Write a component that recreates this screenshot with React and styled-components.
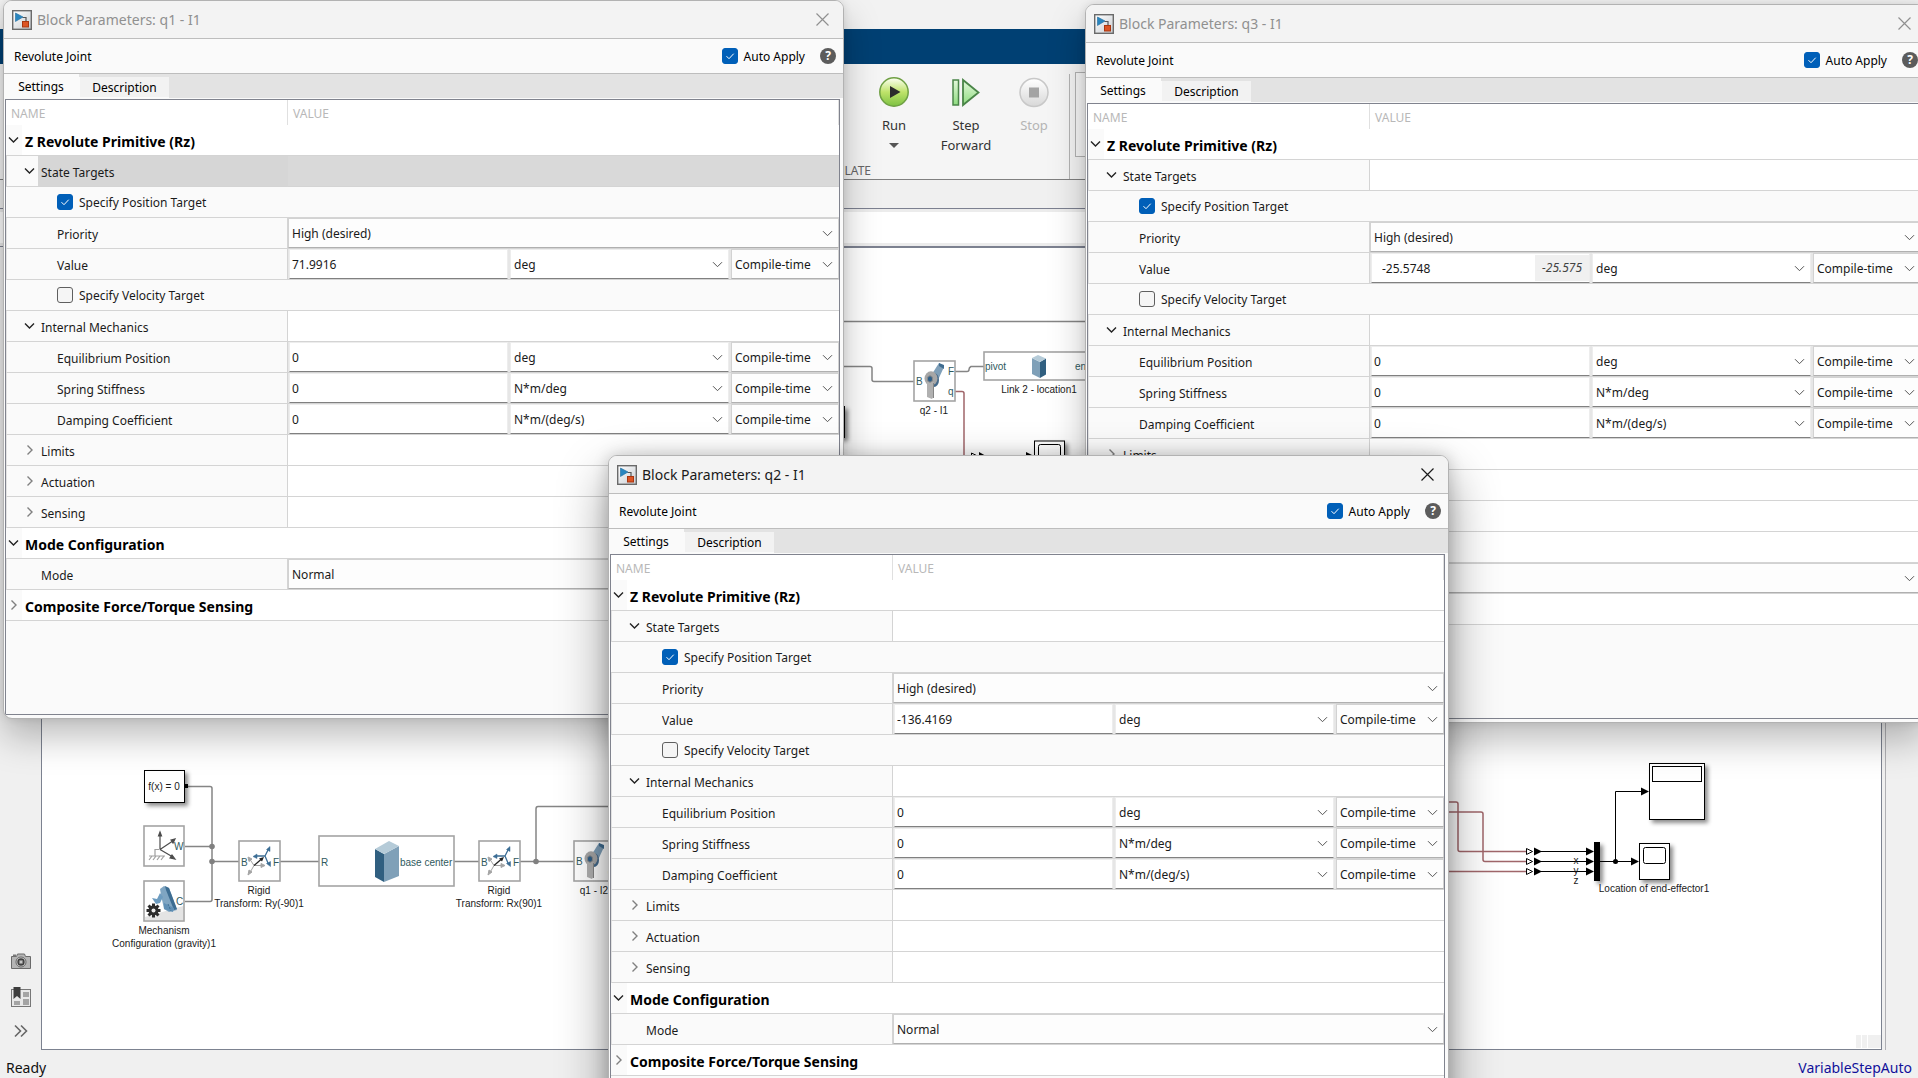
import React, { useState } from 'react';
import styled, { createGlobalStyle, css } from 'styled-components';

const GlobalStyle = createGlobalStyle`
  * {
    box-sizing: border-box;
  }

  body {
    margin: 0;
    font-family: 'Noto Sans', 'Open Sans', sans-serif;
    font-size: 12px;
    color: #1a1a1a;
  }

  button, input, select {
    margin: 0;
    padding: 0;
    border: 0;
    background: none;
    font: inherit;
    color: inherit;
  }
`;

/* ---------- main window ---------- */

const Desktop = styled.main`
  position: relative;
  display: flex;
  flex-direction: column;
  width: 100%;
  height: 100vh;
  overflow: hidden;
  background: #f0f0f0;
`;

const TitleStrip = styled.div`
  flex: none;
  height: 29px;
  background: #f2f2f2;
`;

const TabStrip = styled.div`
  flex: none;
  height: 35px;
  background: #004073;
`;

const Toolstrip = styled.div`
  flex: none;
  display: flex;
  height: 116px;
  background: #f5f5f5;
  border-bottom: 1px solid #808080;
`;

const ToolGroup = styled.section`
  display: flex;
  flex-direction: column;
  width: 1070px;
  margin-top: 10px;
  border-right: 1px solid #b4b4b4;
`;

const ToolRow = styled.div`
  flex: 1;
  display: flex;
  justify-content: flex-end;
  padding-right: 5px;
`;

const ToolButton = styled.button`
  display: flex;
  flex-direction: column;
  align-items: center;
  width: ${({ $width }) => $width}px;
  font-size: 13px;
  line-height: 20px;
  color: #333;

  svg {
    margin: 2px 0 7px;
  }

  &:disabled {
    color: #b4b4b4;
  }
`;

const DropArrow = styled.span`
  margin-top: 8px;
  border: 5px solid transparent;
  border-top-color: #555;
  border-bottom: 0;
`;

const GroupName = styled.span`
  align-self: flex-end;
  margin-right: 198px;
  font-size: 12px;
  line-height: 17px;
  color: #666;
`;

const Gallery = styled.div`
  flex: 1;
  height: 85px;
  margin: 8px 5px;
  border: 1px solid #b4b4b4;
  background: #f9f9f9;
`;

const DocBar = styled.div`
  flex: none;
  height: 28px;
  background: #f0f0f0;
`;

const PathBar = styled.div`
  flex: none;
  height: 39px;
  border: solid #7c8090;
  border-width: 1px 0;
  background: #fff;
  box-shadow: inset 0 3px #ececec, inset 0 -3px #ececec;
`;

const Workspace = styled.div`
  flex: 1;
  display: flex;
  min-height: 0;
  padding-right: 32px;
`;

const SideBar = styled.nav`
  display: flex;
  flex-direction: column;
  justify-content: flex-end;
  align-items: center;
  gap: 13px;
  width: 41px;
  padding-bottom: 6px;

  button {
    height: 22px;
  }
`;

const Canvas = styled.div`
  flex: 1;
  display: flex;
  border: 1px solid #7c8290;
  background: #fff;
`;

const EdgeLine = styled.div`
  width: 4px;
  border-right: 1px solid #b0b0b4;
`;

const StatusBar = styled.footer`
  flex: none;
  display: flex;
  justify-content: space-between;
  height: 28px;
  padding: 0 6px;
  font-size: 14px;
  line-height: 36px;
  color: #111;
`;

const SolverLink = styled.a`
  color: #10109a;
  text-decoration: none;
`;

const DiagramSvg = styled.svg`
  flex: 1;
  width: 100%;
  height: 100%;
  font-family: 'Liberation Sans', Arial, sans-serif;
  font-size: 10px;

  .port {
    fill: #2f5a5e;
  }
  .name {
    fill: #1a1a1a;
    text-anchor: middle;
  }
  .wire {
    fill: none;
    stroke: #858585;
    stroke-width: 1.5;
  }
  .signal {
    fill: none;
    stroke: #a0666a;
    stroke-width: 1.5;
  }
  .line {
    fill: none;
    stroke: #000;
  }
  .frame {
    fill: #fff;
    stroke: #a4a4a4;
    stroke-width: 1.6;
  }
  .black {
    fill: #fff;
    stroke: #000;
  }
  .lift {
    filter: drop-shadow(3px 3px 2px rgba(0, 0, 0, 0.45));
  }
`;

/* ---------- dialogs ---------- */

const Dialog = styled.section`
  position: absolute;
  left: ${({ $left }) => $left}px;
  top: ${({ $top }) => $top}px;
  width: 841px;
  border: 1px solid #b2b2b2;
  border-radius: 9px;
  background: #fafafa;
  overflow: hidden;
  box-shadow: ${({ $active }) =>
    $active
      ? '0 22px 50px rgba(0, 0, 0, 0.42), 0 0 16px rgba(0, 0, 0, 0.18)'
      : '0 18px 36px rgba(0, 0, 0, 0.26), 0 0 8px rgba(0, 0, 0, 0.1)'};
`;

const DialogTitle = styled.header`
  display: flex;
  align-items: center;
  gap: 5px;
  height: 38px;
  padding: 0 14px 0 8px;
  border-bottom: 1px solid #bdbdbd;
  background: #f3f3f3;
  color: ${({ $active }) => ($active ? '#1a1a1a' : '#909090')};

  h2 {
    flex: 1;
    margin: 0;
    font-size: 14px;
    font-weight: 400;
  }

  button {
    display: flex;
  }
`;

const DialogHead = styled.div`
  display: flex;
  align-items: center;
  height: 35px;
  padding: 0 7px 0 10px;
  border-bottom: 1px solid #bdbdbd;
  color: #000;
`;

const BlockType = styled.span`
  flex: 1;
`;

const HelpButton = styled.button`
  width: 16px;
  height: 16px;
  margin-left: 15px;
  border-radius: 50%;
  background: #5c5c5c;
  color: #fff;
  font-size: 12px;
  font-weight: 700;
  line-height: 16px;
`;

const CheckLabel = styled.label`
  display: flex;
  align-items: center;
  gap: 6px;
`;

const CheckGrid = styled.span`
  display: grid;
  place-items: center;

  > * {
    grid-area: 1 / 1;
  }

  svg {
    pointer-events: none;
  }
`;

const CheckBox = styled.input`
  appearance: none;
  width: 16px;
  height: 16px;
  border: 1px solid #5f5f5f;
  border-radius: 3px;
  background: #f5f5f5;

  &:checked {
    border-color: #005fb8;
    background: #005fb8;
  }
`;

const Tabs = styled.div`
  display: flex;
  align-items: flex-end;
  height: 24px;
  background: #e3e3e3;
`;

const Tab = styled.button`
  color: #000;
  ${({ $selected }) =>
    $selected
      ? css`
          width: 75px;
          height: 24px;
          padding-right: 15px;
          padding-left: 14px;
          background: #fafafa;
        `
      : css`
          width: 90px;
          height: 21px;
          border: solid #fafafa;
          border-width: 0 0 1px 1px;
          background: #f2f2f2;
        `}
`;

const GridFrame = styled.div`
  margin: 1px 3px 3px 1px;
  padding-bottom: 93px;
  border: 1px solid #80838e;
`;

const PropertyTable = styled.table`
  width: 100%;
  table-layout: fixed;
  border-spacing: 0;

  th, td {
    height: 31px;
    padding: 0;
    border-bottom: 1px solid #d4d4d4;
    font-weight: 400;
    text-align: left;
  }

  tbody th {
    padding-top: 2px;
  }

  thead th {
    height: 25px;
    padding: 2px 0 0 5px;
    border: solid #e0e0e0;
    border-width: 0 1px 0 0;
    background: #fff;
    color: #b8b8b8;
  }
`;

const NameCol = styled.col`
  width: 282px;
`;

const NameCell = styled.th`
  border-right: 1px solid #d4d4d4;
  border-left: 1px solid #e2e2e2;
  background: ${({ $selected }) =>
    $selected ? 'linear-gradient(90deg, #fafafa 31px, #d6d6d6 31px)' : '#fafafa'};
  ${({ $selected }) => $selected && 'border-color: #d6d6d6;'}
`;

const PropLabel = styled.label`
  padding-left: ${({ $level }) => ($level === 2 ? '34px' : '50px')};
`;

const SectionCell = styled.th`
  background: linear-gradient(90deg, #fafafa 16px, #fff 16px);
`;

const CheckCell = styled.td`
  background: #fafafa;

  label {
    padding-left: 51px;
  }
`;

const ValueCell = styled.td`
  background: ${({ $selected }) => ($selected ? '#d9d9d9' : '#fff')};
`;

const Expander = styled.button`
  display: flex;
  align-items: center;
  gap: 6px;
  padding-left: ${({ $section }) => ($section ? '2px' : '17px')};
  ${({ $section }) =>
    $section &&
    css`
      font-size: 14px;
      font-weight: 700;
      color: #000;
    `}
`;

const FieldRow = styled.div`
  display: grid;
  grid-template-columns: 1fr 1fr 108px;
  gap: 2px;
  height: 30px;
  padding-left: 1px;
  background: #e6e6e6;
`;

const Field = styled.div`
  display: grid;
  align-items: center;
  height: 30px;
  border: solid #d2d2d2;
  border-width: 1px;
  border-bottom-color: #b0b0b0;
  background: #fdfdfd;
  ${({ $editable }) =>
    $editable &&
    css`
      border-color: #ededed;
      border-bottom-color: #808080;
      background: #fff;
    `}

  > * {
    grid-area: 1 / 1;
  }

  svg {
    justify-self: end;
    margin-right: 5px;
    pointer-events: none;
  }
`;

const SelectBox = styled.select`
  appearance: none;
  width: 100%;
  height: 28px;
  padding: 1px 0 0 3px;
`;

const TextBox = styled.input`
  width: 100%;
  height: 28px;
  padding: 1px 0 0 ${({ $inset }) => ($inset ? '10px' : '2px')};
`;

const Evaluated = styled.output`
  justify-self: end;
  height: 26px;
  padding: 0 7px;
  background: #f0f0f0;
  color: #444;
  font-style: italic;
  line-height: 25px;
`;

/* ---------- icons ---------- */

const BlockIcon = () => (
  <svg width="20" height="20" viewBox="0 0 20 20">
    <defs>
      <linearGradient id="blockFill" x1="0" y1="0" x2="1" y2="1">
        <stop offset="0" stopColor="#fff" />
        <stop offset="1" stopColor="#c9cdd2" />
      </linearGradient>
    </defs>
    <rect x="0.7" y="0.7" width="18.600" height="18.600" fill="url(#blockFill)" stroke="#6a6a6a" strokeWidth="1.400" />
    <path d="M10.500 7.500h3.500v5" fill="none" stroke="#555" strokeWidth="1.200" />
    <path d="M3.500 3l7.500 4-7.500 4.500z" fill="#2a86bf" stroke="#1f6c9e" strokeWidth="0.600" />
    <rect x="10.500" y="11.500" width="6" height="5.500" fill="#dc5424" stroke="#a83610" />
  </svg>
);

const CloseIcon = () => (
  <svg width="13" height="13" viewBox="0 0 13 13">
    <path d="M0.5 0.5l12 12M12.5 0.5l-12 12" stroke="currentColor" strokeWidth="1.2" />
  </svg>
);

const DownIcon = () => (
  <svg width="11" height="11" viewBox="0 0 11 11">
    <path d="M1 3.2l4.5 4.5L10 3.2" fill="none" stroke="#555" />
  </svg>
);

const Chevron = ({ open }) => (
  <svg width="11" height="12" viewBox="0 0 11 12">
    {open ? (
      <path d="M1 2.5l4.5 4.5L10 2.5" fill="none" stroke="#222" strokeWidth="1.4" />
    ) : (
      <path d="M3.5 0.5l4.5 4.5L3.5 9.5" fill="none" stroke="#808080" strokeWidth="1.4" />
    )}
  </svg>
);

const RunIcon = () => (
  <svg width="32" height="32" viewBox="0 0 32 32">
    <defs>
      <linearGradient id="runFill" x1="0" y1="0" x2="0" y2="1">
        <stop offset="0" stopColor="#fdfff4" />
        <stop offset="0.5" stopColor="#bfe36a" />
        <stop offset="1" stopColor="#7cc142" />
      </linearGradient>
    </defs>
    <circle cx="16" cy="16" r="14.2" fill="url(#runFill)" stroke="#6fa044" strokeWidth="1.5" />
    <path d="M12 10l10.500 6L12 22z" fill="#2c2c2c" />
  </svg>
);

const StepIcon = () => (
  <svg width="32" height="32" viewBox="0 0 32 32">
    <defs>
      <linearGradient id="stepFill" x1="0" y1="0" x2="0" y2="1">
        <stop offset="0" stopColor="#e4f8dc" />
        <stop offset="1" stopColor="#8fdc80" />
      </linearGradient>
    </defs>
    <rect x="3" y="4" width="5.500" height="25" fill="url(#stepFill)" stroke="#4a8548" strokeWidth="1.500" />
    <path d="M13 4v25l15.500-12.500z" fill="url(#stepFill)" stroke="#4a8548" strokeWidth="1.800" />
  </svg>
);

const StopIcon = () => (
  <svg width="32" height="32" viewBox="0 0 32 32">
    <defs>
      <linearGradient id="stopFill" x1="0" y1="0" x2="0" y2="1">
        <stop offset="0" stopColor="#fff" />
        <stop offset="1" stopColor="#d8d8d8" />
      </linearGradient>
    </defs>
    <circle cx="16" cy="16.500" r="14" fill="url(#stopFill)" stroke="#c8c8c8" strokeWidth="1.500" />
    <rect x="11" y="11.500" width="10" height="10" fill="#a4a4a4" />
  </svg>
);

const CameraIcon = () => (
  <svg width="20" height="16" viewBox="0 0 20 16">
    <path d="M0.500 3.500h5l1-2.500h7l1 2.500h5v12h-19z" fill="#b4b4b4" stroke="#6a6a6a" />
    <rect x="2" y="1.500" width="3" height="2" fill="#777" />
    <circle cx="10" cy="9" r="5" fill="#ddd" stroke="#666" />
    <circle cx="10" cy="9" r="3" fill="#888" stroke="#3c3c3c" strokeWidth="1.400" />
    <circle cx="10" cy="9" r="1" fill="#ddd" />
  </svg>
);

const BookmarkIcon = () => (
  <svg width="20" height="20" viewBox="0 0 20 20">
    <rect x="0.500" y="2.500" width="19" height="17" fill="#e8e8e8" stroke="#777" />
    <path d="M12 5h6v5h-6zM12 12h6v6h-6zM3 14h6v4H3z" fill="#a4a4a4" />
    <path d="M2.500 0h7v12L6 9l-3.500 3z" fill="#3c3c3c" />
  </svg>
);

const MoreIcon = () => (
  <svg width="14" height="14" viewBox="0 0 14 14">
    <path d="M1 1.500L6.500 7 1 12.500M7 1.500L12.500 7 7 12.500" fill="none" stroke="#666" strokeWidth="1.600" />
  </svg>
);

/* ---------- block diagram ---------- */

const Prism = ({ x, y, w, h }) => (
  <g transform={`translate(${x} ${y}) scale(${w / 24} ${h / 41})`}>
    <path d="M0 8l9 5v28l-9-5z" fill="#305f80" />
    <path d="M9 13l15-8v30L9 41z" fill="#7fa0b8" />
    <path d="M0 8L14 0l10 5-15 8z" fill="#b5cbd8" />
  </g>
);

/* the body of a link block, with the dark face on the right */
const LinkPrism = ({ x, y }) => (
  <g transform={`translate(${x} ${y})`}>
    <path d="M0 3l8 4v16l-8-4z" fill="#7fa0b8" />
    <path d="M8 7l6-3.500v16L8 23z" fill="#305f80" />
    <path d="M0 3l6-3 8 3.500L8 7z" fill="#b5cbd8" />
  </g>
);

const WorldFrame = () => (
  <g transform="translate(143 825)" fill="none" stroke="#4c4c4c" strokeWidth="1.200">
    <path d="M16 24.500h-4v6M6 31h16M9 31l-3 4M13 31l-3 4M17 31l-3 4M21 31l-3 4" stroke="#a0a0a0" />
    <path d="M17 24.500V9M17 24.500l12-8M17 24.500l12 7" />
    <path d="M15.500 11l1.500-4 1.500 4zM28 15l4-1-2 4zM27 33l5 1-3-4z" fill="#4c4c4c" />
  </g>
);

const Mechanism = () => (
  <g transform="translate(143 880)">
    <path d="M2 40V37L40 26v14z" fill="#e4e4e4" />
    <path d="M17 9l4-3 5 2 8 22-8 2-5-3-3-14z" fill="#7fa5c2" />
    <path d="M22 6l4 2 8 21-3 1-8-20z" fill="#3d6d92" />
    <path d="M9 18l5 1 3-6 3 4-3 6-4 1z" fill="#6d9cc0" />
    <path d="M21 23l10 5-1 4-9-3z" fill="#6090b6" />
    <path d="M25 24l3 7" stroke="#3d6d92" strokeDasharray="2 1.500" />
    <g stroke="#2c2c2c" strokeWidth="3">
      <path d="M10.500 23.500v14M3.500 30.500h14M5.500 25.500l10 10M15.500 25.500l-10 10" />
    </g>
    <circle cx="10.500" cy="30.500" r="5" fill="#2c2c2c" />
    <circle cx="10.500" cy="30.500" r="2" fill="#ececec" />
  </g>
);

const Joint = ({ x, y }) => (
  <g transform={`translate(${x} ${y})`}>
    <path d="M7 11l7-11 5 4-6 13z" fill="#7f9fb8" />
    <path d="M14 0l5 2v4l-5-3z" fill="#3f6c90" />
    <ellipse cx="9" cy="17" rx="5" ry="7" fill="#44698a" />
    <ellipse cx="6" cy="15.500" rx="6.500" ry="7.200" fill="#a6a6a6" />
    <path d="M2 19h7v14l-2 3-5-2z" fill="#b0b0b0" />
    <path d="M8.500 20v15" stroke="#858585" />
    <ellipse cx="5" cy="16" rx="2.600" ry="3.200" fill="#2f5f88" stroke="#8a8a8a" />
  </g>
);

const JointBlock = ({ x, y, name }) => (
  <g>
    <rect className="frame" x={x} y={y} width="41" height="40" />
    <Joint x={x + 11} y={y + 2} />
    <text className="port" x={x + 2} y={y + 24}>B</text>
    <text className="port" x={x + 34} y={y + 14}>F</text>
    <text className="port" x={x + 34} y={y + 34}>q</text>
    <text className="name" x={x + 20} y={y + 53}>{name}</text>
  </g>
);

const RigidBlock = ({ x, name }) => (
  <g>
    <rect className="frame" x={x} y="841" width="41" height="40" />
    <g transform={`translate(${x} 841)`}>
      <g stroke="#a4a4a4" fill="#a4a4a4">
        <path d="M15 24.500l-4-6M15 24.500h9M15 24.500l-4 7" fill="none" />
        <path d="M9 16l4 2-3 2.500zM22 22.500v4l4-2zM9 34l1-5 3 2z" />
      </g>
      <path d="M15 24.500l7-6" stroke="#222" strokeWidth="1.300" />
      <path d="M20 17.500l5-1.500-2 4.500z" fill="#222" />
      <g stroke="#3a6c94" fill="#3a6c94">
        <path d="M26 15l3-6M26 15h-8M26 15l3 7" fill="none" strokeWidth="1.300" />
        <path d="M27.500 8.500L31 5.500v5zM18 13v4.500l-4-2zM27.500 22.500l4 3v-5z" strokeWidth="0.500" />
      </g>
    </g>
    <text className="port" x={x + 2} y="866">B</text>
    <text className="port" x={x + 34} y="866">F</text>
    <text className="name" x={x + 20} y="894">Rigid</text>
    <text className="name" x={x + 20} y="907">{name}</text>
  </g>
);

const SignalInput = ({ y }) => (
  <g>
    <path className="line" d={`M1526.500 ${y - 3}v6l6-3z`} />
    <path className="line" d={`M1540 ${y}h48`} />
    <path d={`M1534 ${y - 4}l8 4-8 4zM1586 ${y - 4}l8 4-8 4z`} />
  </g>
);

/* drawn in window coordinates, the canvas starts at 42,248 */
const Diagram = () => (
  <DiagramSvg role="img" aria-label="Block diagram">
    <g transform="translate(-42 -248)">
      <path className="wire" d="M42 321.500H1882" />
      <path className="wire" d="M800 366.500H870q2 0 2 2V379.500q0 2 2 2H914" />
      <path className="wire" d="M954 371.500H967q2 0 2-2t2-3H984" />
      <path className="signal" d="M954 391.500H962q2 0 2 2V500" />
      <rect x="800" y="406" width="45" height="32" className="lift" />
      <JointBlock x={914} y={361} name="q2 - I1" />
      <rect className="frame" x="984" y="352" width="111" height="28" />
      <LinkPrism x={1032} y={355} />
      <text className="port" x="985" y="370">pivot</text>
      <text className="port" x="1075" y="370">end</text>
      <text className="name" x="1039" y="393">Link 2 - location1</text>
      <path d="M971.500 453v6l6-3z" className="line" />
      <path d="M979 452l7 4-7 4zM1026 452l8 4-8 4z" />
      <g className="lift">
        <rect className="black" x="1034.500" y="441" width="30" height="36" />
      </g>
      <rect className="black" x="1038.500" y="444.500" width="22" height="16" rx="2" />

      <path className="wire" d="M186 786.500H210q2 0 2 2V899.500q0 2-2 2H185M185 846.500H212M212 861.500H239" />
      <path className="wire" d="M280 861.500H319M454 861.500H479M520 861.500H574M536 861V809q0-2.500 2-2.500H640" />
      <circle cx="212" cy="846.500" r="2.800" fill="#808080" />
      <circle cx="212" cy="861.500" r="2.800" fill="#808080" />
      <circle cx="536" cy="861.500" r="2.800" fill="#808080" />
      <g className="lift">
        <rect className="black" x="144.500" y="770.500" width="40" height="32" />
      </g>
      <rect x="185" y="784" width="3" height="4" />
      <text className="name" x="164" y="790">f(x) = 0</text>
      <rect className="frame" x="144" y="826" width="40" height="40" />
      <WorldFrame />
      <text className="port" x="174" y="850">W</text>
      <rect className="frame" x="144" y="881" width="40" height="40" />
      <Mechanism />
      <text className="port" x="176" y="905">C</text>
      <text className="name" x="164" y="934">Mechanism</text>
      <text className="name" x="164" y="947">Configuration (gravity)1</text>
      <RigidBlock x={239} name="Transform: Ry(-90)1" />
      <rect className="frame" x="319" y="836" width="135" height="50" />
      <Prism x={375} y={841} w={24} h={41} />
      <text className="port" x="321" y="866">R</text>
      <text className="port" x="400" y="866">base center</text>
      <RigidBlock x={479} name="Transform: Rx(90)1" />
      <JointBlock x={574} y={841} name="q1 - I2" />

      <path className="signal" d="M1440 802H1456q2 0 2 2V849.500q0 2 2 2H1527M1440 812H1481q2 0 2 2V859.500q0 2 2 2H1527M1440 871.500H1527" />
      <SignalInput y={851.5} />
      <SignalInput y={861.5} />
      <SignalInput y={871.5} />
      <text className="name" x="1576" y="864">x</text>
      <text className="name" x="1576" y="874">y</text>
      <text className="name" x="1576" y="884">z</text>
      <rect className="lift" x="1594" y="842" width="6" height="39" />
      <path className="line" d="M1600 861.500H1634M1615.500 861V791.500H1643" />
      <circle cx="1615.500" cy="861.500" r="2.500" />
      <path d="M1631 857.500l8 4-8 4zM1641 787.500l8 4-8 4z" />
      <g className="lift">
        <rect className="black" x="1649.500" y="763.500" width="55" height="56" />
      </g>
      <rect className="black" x="1652.500" y="766.500" width="49" height="15" />
      <g className="lift">
        <rect className="black" x="1639.500" y="843.500" width="30" height="36" />
      </g>
      <rect className="black" x="1643.500" y="847.500" width="22" height="16" rx="2" />
      <text className="name" x="1654" y="892">Location of end-effector1</text>
      <path d="M1856 1035h5v13h-5zM1862 1035h5v13h-5zM1868 1035h13v13h-13z" fill="#f0f0f0" />
    </g>
  </DiagramSvg>
);

/* ---------- dialog parts ---------- */

const Check = ({ label, initial }) => {
  const [checked, setChecked] = useState(initial);
  return (
    <CheckLabel>
      <CheckGrid>
        <CheckBox
          type="checkbox"
          checked={checked}
          onChange={(e) => setChecked(e.target.checked)}
        />
        {checked && (
          <svg width="10" height="10" viewBox="0 0 10 10">
            <path d="M1.500 5.200L4 7.700l4.700-5" fill="none" stroke="#fff" />
          </svg>
        )}
      </CheckGrid>
      {label}
    </CheckLabel>
  );
};

const Select = ({ id, label, options, editable }) => (
  <Field $editable={editable}>
    <SelectBox id={id} aria-label={label}>
      {options.map((option) => (
        <option key={option}>{option}</option>
      ))}
    </SelectBox>
    <DownIcon />
  </Field>
);

const ROWS = [
  { kind: 'section', name: 'Z Revolute Primitive (Rz)', open: true },
  { kind: 'group', name: 'State Targets', open: true },
  { kind: 'check', name: 'Specify Position Target', checked: true },
  { kind: 'choice', name: 'Priority', level: 3, value: 'High (desired)' },
  { kind: 'value', name: 'Value', unit: 'deg' },
  { kind: 'check', name: 'Specify Velocity Target', checked: false },
  { kind: 'group', name: 'Internal Mechanics', open: true },
  { kind: 'value', name: 'Equilibrium Position', unit: 'deg' },
  { kind: 'value', name: 'Spring Stiffness', unit: 'N*m/deg' },
  { kind: 'value', name: 'Damping Coefficient', unit: 'N*m/(deg/s)' },
  { kind: 'group', name: 'Limits' },
  { kind: 'group', name: 'Actuation' },
  { kind: 'group', name: 'Sensing' },
  { kind: 'section', name: 'Mode Configuration', open: true },
  { kind: 'choice', name: 'Mode', level: 2, value: 'Normal' },
  { kind: 'section', name: 'Composite Force/Torque Sensing' },
];

const PropertyRow = ({ row, joint, value, evaluated, selected }) => {
  const id = `${joint}-${row.name.replace(/\W+/g, '-')}`;

  if (row.kind === 'section') {
    return (
      <tr>
        <SectionCell colSpan={2}>
          <Expander $section aria-expanded={!!row.open}>
            <Chevron open={row.open} />
            {row.name}
          </Expander>
        </SectionCell>
      </tr>
    );
  }
  if (row.kind === 'group') {
    return (
      <tr>
        <NameCell scope="row" $selected={selected}>
          <Expander aria-expanded={!!row.open}>
            <Chevron open={row.open} />
            {row.name}
          </Expander>
        </NameCell>
        <ValueCell $selected={selected} />
      </tr>
    );
  }
  if (row.kind === 'check') {
    return (
      <tr>
        <CheckCell colSpan={2}>
          <Check label={row.name} initial={row.checked} />
        </CheckCell>
      </tr>
    );
  }
  return (
    <tr>
      <NameCell scope="row">
        <PropLabel htmlFor={id} $level={row.level}>
          {row.name}
        </PropLabel>
      </NameCell>
      <ValueCell>
        {row.kind === 'choice' ? (
          <Select id={id} options={[row.value]} />
        ) : (
          <FieldRow>
            <Field $editable>
              <TextBox id={id} defaultValue={value} $inset={!!evaluated} />
              {evaluated && <Evaluated htmlFor={id}>{evaluated}</Evaluated>}
            </Field>
            <Select editable label={`${row.name} unit`} options={[row.unit]} />
            <Select label={`${row.name} configurability`} options={['Compile-time', 'Run-time']} />
          </FieldRow>
        )}
      </ValueCell>
    </tr>
  );
};

const BlockParameters = ({ joint, left, top, active, position, evaluated, selected }) => (
  <Dialog $left={left} $top={top} $active={active}>
    <DialogTitle $active={active}>
      <BlockIcon />
      <h2>Block Parameters: {joint} - I1</h2>
      <button aria-label="Close">
        <CloseIcon />
      </button>
    </DialogTitle>
    <DialogHead>
      <BlockType>Revolute Joint</BlockType>
      <Check label="Auto Apply" initial />
      <HelpButton aria-label="Help">?</HelpButton>
    </DialogHead>
    <Tabs role="tablist">
      <Tab role="tab" aria-selected $selected>
        Settings
      </Tab>
      <Tab role="tab">Description</Tab>
    </Tabs>
    <GridFrame>
      <PropertyTable>
        <colgroup>
          <NameCol />
          <col />
        </colgroup>
        <thead>
          <tr>
            <th scope="col">NAME</th>
            <th scope="col">VALUE</th>
          </tr>
        </thead>
        <tbody>
          {ROWS.map((row) => (
            <PropertyRow
              key={row.name}
              row={row}
              joint={joint}
              value={row.name === 'Value' ? position : '0'}
              evaluated={row.name === 'Value' ? evaluated : undefined}
              selected={row.name === selected}
            />
          ))}
        </tbody>
      </PropertyTable>
    </GridFrame>
  </Dialog>
);

const App = () => (
  <>
    <GlobalStyle />
    <Desktop>
      <TitleStrip />
      <TabStrip />
      <Toolstrip>
        <ToolGroup>
          <ToolRow>
            <ToolButton $width={68}>
              <RunIcon />
              Run
              <DropArrow />
            </ToolButton>
            <ToolButton $width={76}>
              <StepIcon />
              Step
              <span>Forward</span>
            </ToolButton>
            <ToolButton $width={60} disabled>
              <StopIcon />
              Stop
            </ToolButton>
          </ToolRow>
          <GroupName>SIMULATE</GroupName>
        </ToolGroup>
        <Gallery />
      </Toolstrip>
      <DocBar />
      <PathBar />
      <Workspace>
        <SideBar>
          <button aria-label="Take screenshot">
            <CameraIcon />
          </button>
          <button aria-label="Viewmarks">
            <BookmarkIcon />
          </button>
          <button aria-label="Show more">
            <MoreIcon />
          </button>
        </SideBar>
        <Canvas>
          <Diagram />
        </Canvas>
        <EdgeLine />
      </Workspace>
      <StatusBar>
        <span>Ready</span>
        <SolverLink href="#solver">VariableStepAuto</SolverLink>
      </StatusBar>
      <BlockParameters joint="q1" left={3} top={0} position="71.9916" selected="State Targets" />
      <BlockParameters joint="q3" left={1085} top={4} position="-25.5748" evaluated="-25.575" />
      <BlockParameters joint="q2" left={608} top={455} position="-136.4169" active />
    </Desktop>
  </>
);

export default App;
